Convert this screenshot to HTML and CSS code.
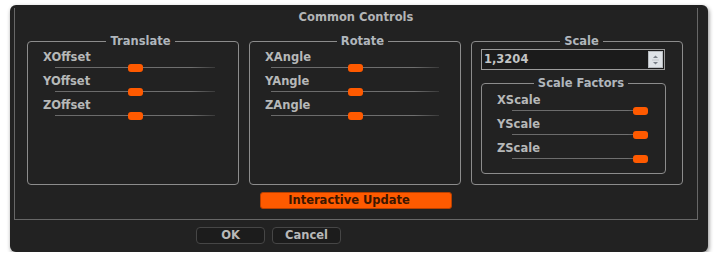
FILE: index.html
```html
<!DOCTYPE html>
<html>
<head>
<meta charset="utf-8">
<title>Common Controls</title>
<link rel="stylesheet" href="styles.css">
</head>
<body>
<div class="window">
  <div class="frame">
    <div class="title">Common Controls</div>
    <div class="groups">
      <fieldset class="group group-translate">
        <legend>Translate</legend>
        <div class="param"><span class="label">XOffset</span><div class="slider"><span class="thumb" style="--v:0.5"></span></div></div>
        <div class="param"><span class="label">YOffset</span><div class="slider"><span class="thumb" style="--v:0.5"></span></div></div>
        <div class="param"><span class="label">ZOffset</span><div class="slider"><span class="thumb" style="--v:0.5"></span></div></div>
      </fieldset>
      <fieldset class="group group-rotate">
        <legend>Rotate</legend>
        <div class="param"><span class="label">XAngle</span><div class="slider"><span class="thumb" style="--v:0.5"></span></div></div>
        <div class="param"><span class="label">YAngle</span><div class="slider"><span class="thumb" style="--v:0.5"></span></div></div>
        <div class="param"><span class="label">ZAngle</span><div class="slider"><span class="thumb" style="--v:0.5"></span></div></div>
      </fieldset>
      <fieldset class="group group-scale">
        <legend>Scale</legend>
        <div class="spinbox">
          <span class="spin-value">1,3204</span>
          <span class="spin-buttons">
            <svg width="9" height="16" viewBox="0 0 9 16"><path d="M2 6 L4.5 3.5 L7 6 Z" fill="#7a8088"/><path d="M2 10 L4.5 12.5 L7 10 Z" fill="#7a8088"/><line x1="1" y1="8" x2="8" y2="8" stroke="#c4c8cc" stroke-width="1"/></svg>
          </span>
        </div>
        <fieldset class="subgroup">
          <legend>Scale Factors</legend>
          <div class="param"><span class="label">XScale</span><div class="slider"><span class="thumb" style="--v:1"></span></div></div>
          <div class="param"><span class="label">YScale</span><div class="slider"><span class="thumb" style="--v:1"></span></div></div>
          <div class="param"><span class="label">ZScale</span><div class="slider"><span class="thumb" style="--v:1"></span></div></div>
        </fieldset>
      </fieldset>
    </div>
    <button class="update">Interactive Update</button>
  </div>
  <div class="actions">
    <button class="btn">OK</button>
    <button class="btn">Cancel</button>
  </div>
</div>
</body>
</html>
```

FILE: styles.css
```css
html, body {
  margin: 0;
  padding: 0;
  background: #ffffff;
}

body {
  font-family: "DejaVu Sans", Verdana, sans-serif;
  font-size: 11.5px;
  font-weight: bold;
  color: #b6b6b6;
}

.window {
  margin: 5px 0 0 10px;
  width: 698px;
  height: 247px;
  box-sizing: border-box;
  padding: 3px 10px 0 4px;
  background: #222222;
  border-radius: 6px;
  box-shadow: 1px 2px 4px rgba(0, 0, 0, 0.45);
  display: flex;
  flex-direction: column;
}

.frame {
  height: 212px;
  box-sizing: border-box;
  border: 1px solid #676767;
  border-top: none;
  display: flex;
  flex-direction: column;
  align-items: center;
}

.title {
  margin-top: 2px;
  line-height: 14px;
  color: #b2b4b6;
}

.groups {
  align-self: stretch;
  display: flex;
  gap: 10px;
  margin-top: 10px;
  padding-left: 12px;
}

fieldset {
  margin: 0;
  min-width: 0;
  box-sizing: border-box;
  border: 1px solid #8c8c8c;
  border-radius: 4px;
}

legend {
  margin: 0 auto;
  padding: 0 4px;
  line-height: 14px;
  color: #b0b6bc;
}

.group {
  width: 212px;
  height: 151px;
  padding: 2px 0 0 15px;
}

.param {
  display: flex;
  flex-direction: column;
}

.label {
  line-height: 14px;
  color: #b6b8b8;
}

.slider {
  position: relative;
  height: 10px;
}

.slider::before {
  content: "";
  position: absolute;
  left: 0;
  right: 0;
  top: 3px;
  height: 1px;
  background: linear-gradient(to right, #6a6a6a 0%, #707070 85%, #3a3a3a 100%);
}

.thumb {
  position: absolute;
  top: 0;
  left: calc((100% - 15px) * var(--v));
  width: 15px;
  height: 8px;
  border-radius: 3px;
  background: #ff5a00;
}

.group-translate .slider {
  margin-left: 12px;
  width: 160px;
}

.group-rotate .slider {
  margin-left: 6px;
  width: 168px;
}

.group-scale {
  padding: 1px 0 0 9px;
}

.spinbox {
  width: 184px;
  height: 21px;
  box-sizing: border-box;
  border: 1px solid #9c9c9c;
  background: #1b1b1b;
  display: flex;
  align-items: stretch;
}

.spin-value {
  flex: 1;
  padding-left: 2px;
  line-height: 19px;
  color: #c2c4c4;
}

.spin-buttons {
  width: 15px;
  margin: 1px;
  background: #dfe3e7;
  border: 1px solid #b8bcc0;
  box-sizing: border-box;
  display: flex;
  align-items: center;
  justify-content: center;
}

.subgroup {
  width: 185px;
  height: 98px;
  margin-top: 6px;
  padding: 3px 0 0 15px;
}

.subgroup .slider {
  margin-left: 15px;
  width: 136px;
}

.update {
  margin-top: 7px;
  width: 192px;
  height: 17px;
  box-sizing: border-box;
  padding: 0 14px 0 0;
  border: 1px solid #b84000;
  border-radius: 3px;
  background: #ff5a00;
  color: #3c1600;
  font: inherit;
  line-height: 15px;
}

.actions {
  display: flex;
  gap: 7px;
  margin-top: 7px;
  padding-left: 182px;
}

.btn {
  width: 69px;
  height: 17px;
  box-sizing: border-box;
  padding: 0;
  border: 1px solid #464646;
  border-radius: 4px;
  background: #1c1c1c;
  color: #b8b8b8;
  font: inherit;
  line-height: 15px;
}
```
